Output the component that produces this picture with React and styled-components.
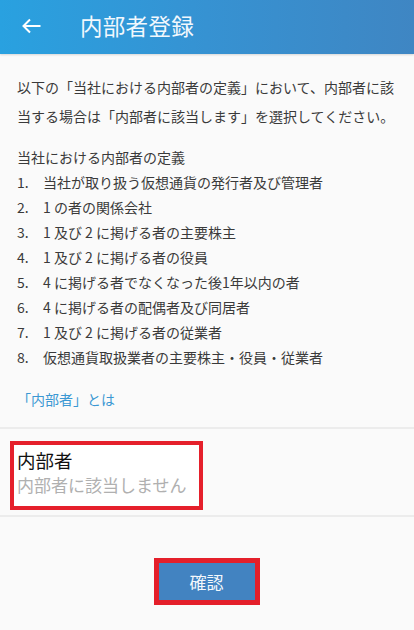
import React from 'react';
import styled, { createGlobalStyle } from 'styled-components';

const GlobalStyle = createGlobalStyle`
  html, body {
    margin: 0;
    padding: 0;
    background: #fafafa;
  }
  body {
    font-family: "Noto Sans CJK JP", "Noto Sans", Roboto, sans-serif;
  }
`;

const definitions = [
  '当社が取り扱う仮想通貨の発行者及び管理者',
  '1 の者の関係会社',
  '1 及び 2 に掲げる者の主要株主',
  '1 及び 2 に掲げる者の役員',
  '4 に掲げる者でなくなった後1年以内の者',
  '4 に掲げる者の配偶者及び同居者',
  '1 及び 2 に掲げる者の従業者',
  '仮想通貨取扱業者の主要株主・役員・従業者',
];

const App = () => {
  return (
    <Page>
      <GlobalStyle />
      <Header>
        <BackButton>
          <svg width="20" height="16" viewBox="0 0 20 16" fill="none">
            <path d="M19.5 8H2.5M9 1.5L2.5 8L9 14.5" stroke="#fff" strokeWidth="2" />
          </svg>
        </BackButton>
        <Title>内部者登録</Title>
      </Header>

      <Content>
        <Intro>
          以下の「当社における内部者の定義」において、内部者に該当する場合は「内部者に該当します」を選択してください。
        </Intro>

        <DefTitle>当社における内部者の定義</DefTitle>
        <DefList>
          {definitions.map((text, index) => (
            <DefItem key={index}>
              <Num>{index + 1}.</Num>
              <span>{text}</span>
            </DefItem>
          ))}
        </DefList>

        <InfoLink>「内部者」とは</InfoLink>
      </Content>

      <Divider />
      <FieldRow>
        <Highlight>
          <FieldLabel>内部者</FieldLabel>
          <FieldValue>内部者に該当しません</FieldValue>
        </Highlight>
      </FieldRow>
      <Divider />

      <Footer>
        <ButtonFrame>
          <ConfirmButton>確認</ConfirmButton>
        </ButtonFrame>
      </Footer>
    </Page>
  );
};

export default App;

const Page = styled.div`
  width: 414px;
  min-height: 630px;
  background: #fafafa;
  display: flex;
  flex-direction: column;
`;

const Header = styled.div`
  height: 54px;
  display: flex;
  align-items: center;
  background: linear-gradient(90deg, #29a1e0 0%, #3692d2 50%, #3f86c3 100%);
  box-shadow: 0 1px 2px rgba(0, 0, 0, 0.15);
`;

const BackButton = styled.div`
  width: 80px;
  padding-left: 21px;
  box-sizing: border-box;
  display: flex;
  align-items: center;
  margin-top: -3px;
`;

const Title = styled.h1`
  margin: 0;
  margin-top: -4px;
  font-size: 22.5px;
  font-weight: 400;
  color: #f2f8fd;
  letter-spacing: 0.3px;
`;

const Content = styled.div`
  padding: 19px 17px 15px 17px;
`;

const Intro = styled.p`
  margin: 0;
  font-size: 14px;
  line-height: 29px;
  color: #3a3a3a;
`;

const DefTitle = styled.div`
  margin-top: 14px;
  font-size: 14px;
  line-height: 25px;
  color: #3a3a3a;
`;

const DefList = styled.div`
  display: flex;
  flex-direction: column;
`;

const DefItem = styled.div`
  display: flex;
  font-size: 14px;
  line-height: 25px;
  color: #3a3a3a;
`;

const Num = styled.span`
  width: 26px;
  flex-shrink: 0;
`;

const InfoLink = styled.div`
  margin-top: 17px;
  font-size: 14px;
  line-height: 25px;
  color: #3b98d3;
`;

const Divider = styled.div`
  height: 2px;
  background: #ececec;
`;

const FieldRow = styled.div`
  height: 86px;
  padding: 12px 0 0 10px;
  box-sizing: border-box;
`;

const Highlight = styled.div`
  width: 193px;
  height: 69px;
  border: 4px solid #e5202b;
  box-sizing: border-box;
  background: #fff;
  padding: 3px 0 0 3px;
  display: flex;
  flex-direction: column;
`;

const FieldLabel = styled.div`
  font-size: 18.5px;
  line-height: 25px;
  color: #111;
`;

const FieldValue = styled.div`
  font-size: 17px;
  line-height: 24px;
  color: #b0b0b0;
`;

const Footer = styled.div`
  display: flex;
  justify-content: center;
  padding-top: 41px;
  padding-right: 1px;
`;

const ButtonFrame = styled.div`
  width: 106px;
  height: 47px;
  border: 5px solid #e41f2a;
  box-sizing: border-box;
  display: flex;
`;

const ConfirmButton = styled.button`
  flex: 1;
  border: none;
  margin: 0;
  padding: 0;
  background: #4283c1;
  color: #f4f8fc;
  font-family: "Noto Sans CJK JP", sans-serif;
  font-size: 17px;
  cursor: pointer;
`;
